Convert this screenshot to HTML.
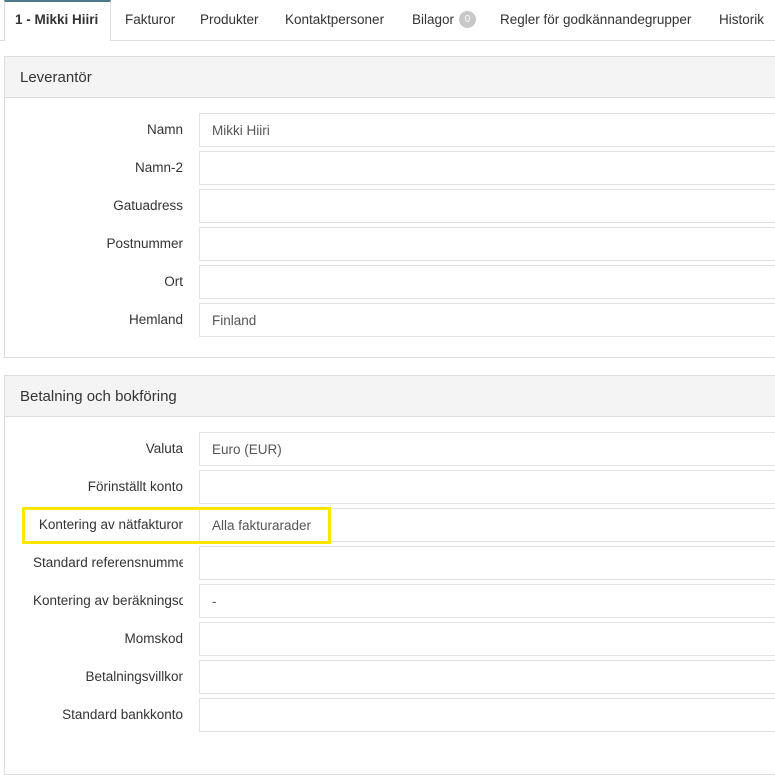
<!DOCTYPE html><html><head><style>
body{margin:0;width:775px;height:727px;overflow:hidden;background:#fff;font-family:"Liberation Sans",sans-serif;color:#333;font-size:13.5px;position:relative}
.tabs{position:absolute;left:0;top:0;width:775px;height:40px;border-bottom:1px solid #ddd}
.tab{position:absolute;top:12px;font-size:13.5px;color:#333;white-space:nowrap}
.act{position:absolute;left:4px;top:0;width:107px;height:41px;border-top:2px solid #4a7a8c;border-left:1px solid #ddd;border-right:1px solid #ddd;background:#fff;box-sizing:border-box}
.badge{position:absolute;left:47px;top:-1px;width:17px;height:17px;border-radius:9px;background:#c8c8c8;color:#fff;font-size:10px;text-align:center;line-height:17px}
.panel{position:absolute;left:4px;width:800px;border:1px solid #ddd;box-sizing:border-box}
.ph{height:41px;background:#f4f4f4;border-bottom:1px solid #ddd;font-size:15px;padding-left:15px;line-height:41px;box-sizing:border-box}
.lab{position:absolute;width:150px;left:33px;text-align:right;white-space:nowrap;overflow:hidden}
.inp{position:absolute;width:700px;height:34px;border:1px solid #e3e3e3;box-sizing:border-box;padding-left:12px;line-height:33px;color:#555}
</style></head><body>
<div class="tabs">
<div class="act"></div>
<div class="tab" style="left:15px;font-weight:bold">1 - Mikki Hiiri</div>
<div class="tab" style="left:125px">Fakturor</div>
<div class="tab" style="left:200px">Produkter</div>
<div class="tab" style="left:285px">Kontaktpersoner</div>
<div class="tab" style="left:412px">Bilagor<span class="badge">0</span></div>
<div class="tab" style="left:500px">Regler för godkännandegrupper</div>
<div class="tab" style="left:719px">Historik</div>
</div>
<div class="panel" style="top:56px;height:302px">
<div class="ph">Leverantör</div>
</div>
<div class="panel" style="top:375px;height:400px">
<div class="ph">Betalning och bokföring</div>
</div>
<div id="f"></div>
<script>
var r1=[["Namn","Mikki Hiiri"],["Namn-2",""],["Gatuadress",""],["Postnummer",""],["Ort",""],["Hemland","Finland"]];
var r2=[["Valuta","Euro (EUR)"],["Förinställt konto",""],["Kontering av nätfakturor","Alla fakturarader"],["Standard referensnummer",""],["Kontering av beräkningsdatum","-"],["Momskod",""],["Betalningsvillkor",""],["Standard bankkonto",""]];
var h="";
function add(rows,y0){rows.forEach(function(r,i){var y=y0+i*38;h+='<div class="lab" style="top:'+(y+9)+'px">'+r[0]+'</div><div class="inp" style="left:199px;top:'+y+'px">'+r[1]+'</div>';});}
add(r1,113);add(r2,432);
h+='<div style="position:absolute;left:22px;top:507px;width:309px;height:37px;border:3px solid #ffe600;box-sizing:border-box"></div>';
document.getElementById("f").innerHTML=h;
</script>
</body></html>
